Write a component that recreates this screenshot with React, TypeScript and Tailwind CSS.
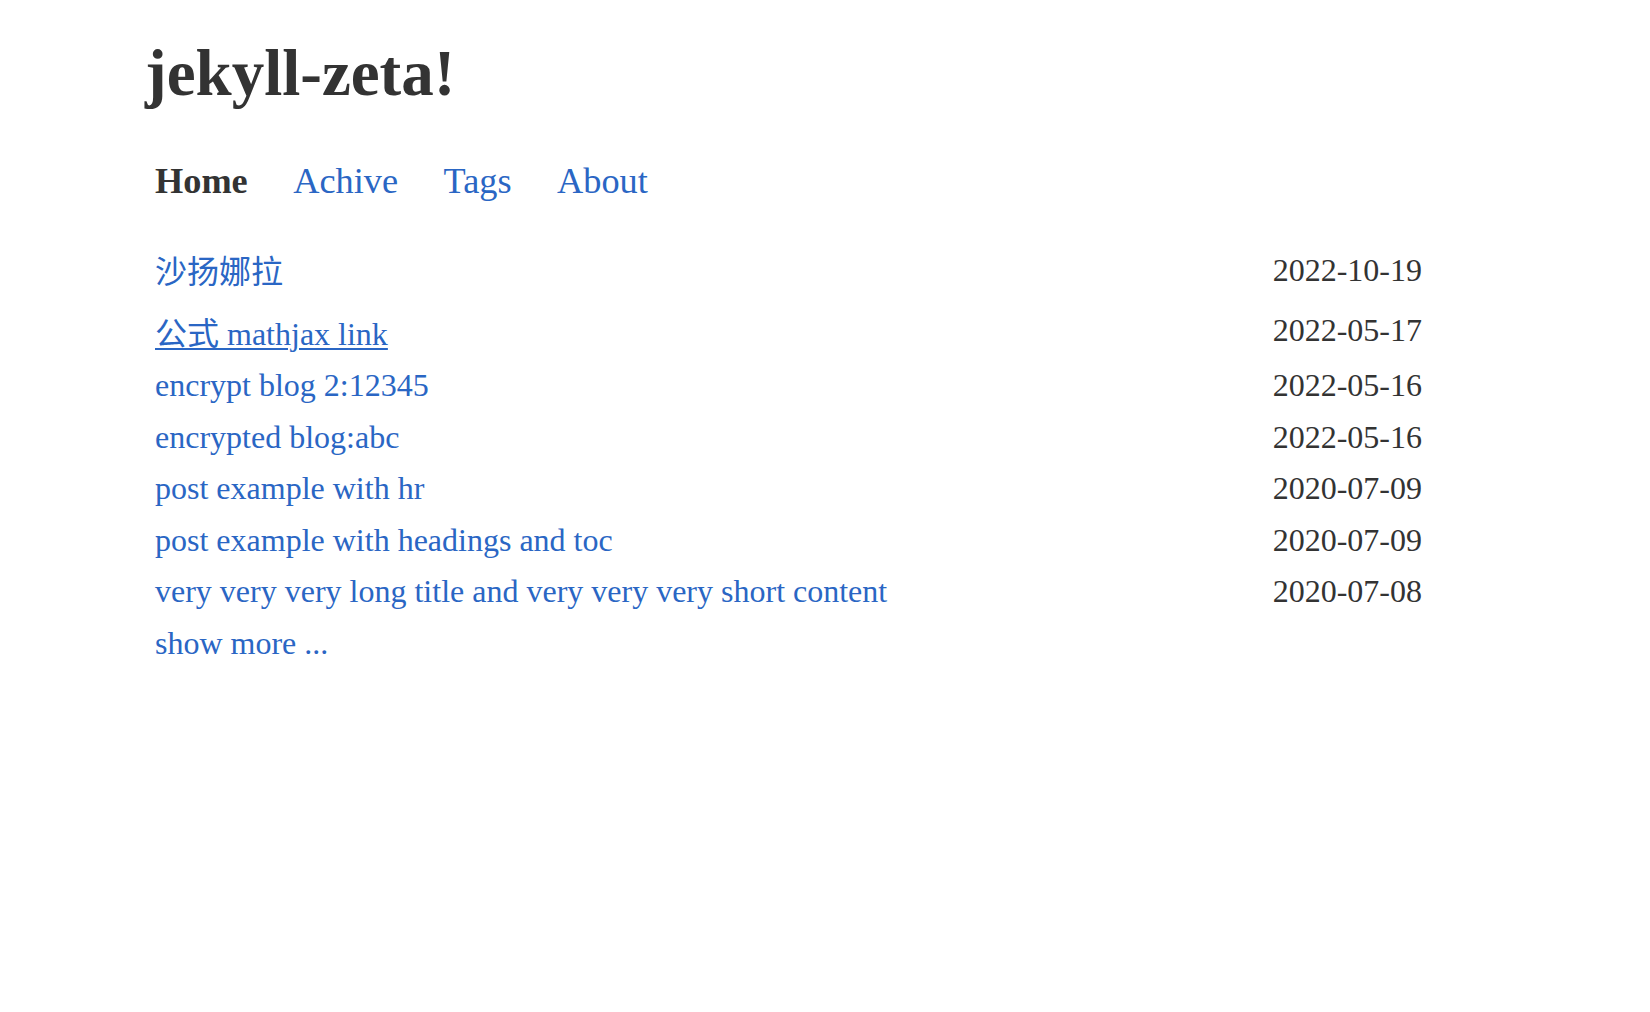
import React from "react";

type Post = { title: string; date: string; href: string };

const posts: Post[] = [
  { title: "沙扬娜拉", date: "2022-10-19", href: "#" },
  { title: "公式 mathjax link", date: "2022-05-17", href: "#" },
  { title: "encrypt blog 2:12345", date: "2022-05-16", href: "#" },
  { title: "encrypted blog:abc", date: "2022-05-16", href: "#" },
  { title: "post example with hr", date: "2020-07-09", href: "#" },
  { title: "post example with headings and toc", date: "2020-07-09", href: "#" },
  { title: "very very very long title and very very very short content", date: "2020-07-08", href: "#" },
];

const font = "font-['Liberation_Serif','Noto_Sans_CJK_SC',serif]";

function PostRow({ post, index }: { post: Post; index: number }) {
  // the two CJK rows sit a little differently, like in the original page
  const row = index === 0 ? "mb-[9.5px]" : "";
  const titleLeading =
    index === 0 ? "leading-[53.5px]" : index === 1 ? "leading-[51px]" : "leading-[51.5px]";
  const dateLeading =
    index === 0 ? "leading-[48px]" : index === 1 ? "leading-[43px]" : "leading-[51.5px]";

  return (
    <li className={`flex items-start justify-between ${row}`}>
      <a
        href={post.href}
        className={`text-[32px] text-[#2a66c4] ${titleLeading} ${
          index === 1 ? "underline decoration-[2px] underline-offset-[3px]" : "no-underline"
        }`}
      >
        {post.title}
      </a>
      <span className={`text-[32px] text-[#333333] ${dateLeading}`}>{post.date}</span>
    </li>
  );
}

export default function App() {
  return (
    <div className={`min-h-screen w-full bg-white ${font} text-[#333333]`}>
      <header className="pl-[145px] pt-[41px]">
        <h1 className="text-[65px] font-bold leading-[64px]">jekyll-zeta!</h1>
      </header>

      <div className="w-[1422px] pl-[155px]">
        <nav className="mt-[55.5px] flex items-center gap-[45.5px] text-[36.3px] leading-[40px]">
          <a href="#" className="font-bold text-[#333333]">
            Home
          </a>
          <a href="#" className="text-[#2a66c4]">
            Achive
          </a>
          <a href="#" className="text-[#2a66c4]">
            Tags
          </a>
          <a href="#" className="text-[#2a66c4]">
            About
          </a>
        </nav>

        <ul className="mt-[45.5px] flex flex-col">
          {posts.map((p, i) => (
            <PostRow key={p.date + p.title} post={p} index={i} />
          ))}
          <li className="leading-[50px]">
            <a href="#" className="text-[32px] text-[#2a66c4]">
              show more ...
            </a>
          </li>
        </ul>
      </div>
    </div>
  );
}
